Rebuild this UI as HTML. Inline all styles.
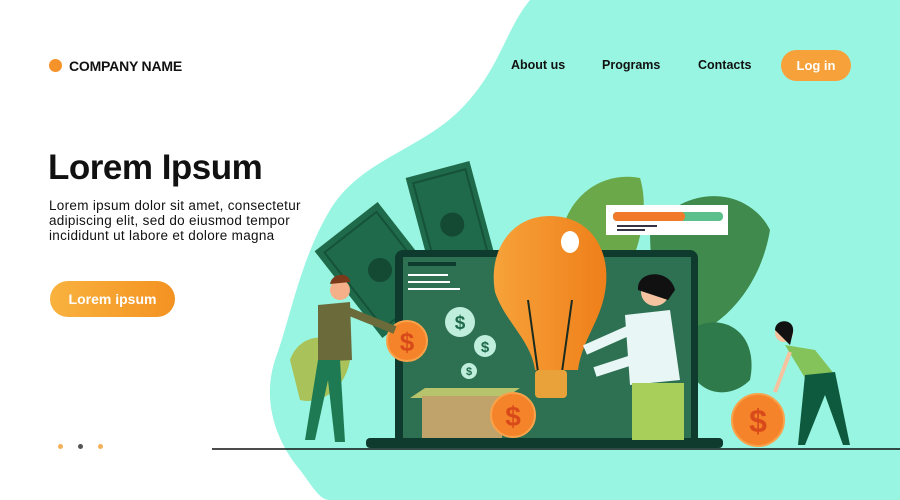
<!DOCTYPE html>
<html><head><style>
body{margin:0;width:900px;height:500px;overflow:hidden;background:#fff;font-family:"Liberation Sans",sans-serif;position:relative}
.a{position:absolute}
</style></head><body>
<svg class="a" style="left:0;top:0" width="900" height="500" viewBox="0 0 900 500">
<path d="M530 0 C505 30 500 70 460 110 C420 150 360 160 330 210 C300 260 290 320 275 360 C262 400 275 440 300 470 C315 490 320 500 330 500 L900 500 L900 0 Z" fill="#98f5e1"/>
<path d="M560 250 C560 200 600 170 640 178 C650 210 640 260 610 300 Z" fill="#6aa84a"/>
<path d="M650 230 C690 180 750 190 770 230 C760 290 720 330 680 340 C660 320 650 280 650 230Z" fill="#3f8a4c"/>
<path d="M690 330 C720 310 760 330 750 380 C730 400 700 395 690 370Z" fill="#2f7a4a"/>
<path d="M290 360 C300 330 340 330 350 360 C345 390 320 405 300 400Z" fill="#a9c35a"/>
<g transform="rotate(-38 380 270)"><rect x="340" y="215" width="80" height="110" fill="#1f6a4b"/><rect x="347" y="222" width="66" height="96" fill="none" stroke="#155238" stroke-width="2"/><circle cx="380" cy="270" r="12" fill="#144a33"/></g>
<g transform="rotate(-15 450 220)"><rect x="418" y="168" width="66" height="110" fill="#1f6a4b"/><rect x="424" y="175" width="54" height="96" fill="none" stroke="#155238" stroke-width="2"/><circle cx="451" cy="225" r="12" fill="#144a33"/></g>
<rect x="395" y="250" width="303" height="195" rx="8" fill="#0e3b2e"/>
<rect x="403" y="257" width="288" height="183" fill="#2d7152"/>
<rect x="366" y="438" width="357" height="10" rx="4" fill="#0e3b2e"/>
<rect x="408" y="262" width="48" height="4" fill="#0e3b2e"/>
<rect x="408" y="274" width="40" height="2" fill="#fff"/><rect x="408" y="281" width="42" height="2" fill="#fff"/><rect x="408" y="288" width="52" height="2" fill="#fff"/>
<circle cx="460" cy="322" r="15" fill="#bfeedd"/><text x="460" y="329" font-size="19" text-anchor="middle" fill="#1f6a4b" font-weight="bold">$</text>
<circle cx="485" cy="346" r="11" fill="#bfeedd"/><text x="485" y="352" font-size="15" text-anchor="middle" fill="#1f6a4b" font-weight="bold">$</text>
<circle cx="469" cy="371" r="8" fill="#bfeedd"/><text x="469" y="375" font-size="11" text-anchor="middle" fill="#1f6a4b" font-weight="bold">$</text>
<path d="M410 398 L425 388 L520 388 L505 398Z" fill="#b7c46c"/><rect x="422" y="396" width="80" height="42" fill="#c0a36a"/>
<defs><linearGradient id="g" x1="0" x2="1"><stop offset="0" stop-color="#f7a23a"/><stop offset="1" stop-color="#ef7f1a"/></linearGradient></defs>
<path d="M550 216 C592 216 612 252 605 292 C600 322 582 340 578 370 L535 370 C531 340 505 322 495 292 C488 252 510 216 550 216Z" fill="url(#g)"/>
<ellipse cx="570" cy="242" rx="9" ry="11" fill="#fff"/>
<path d="M528 300 L538 372 M572 300 L562 372" stroke="#1b2b1f" stroke-width="2"/>
<rect x="535" y="370" width="32" height="28" rx="4" fill="#e9a23a"/>
<rect x="606" y="205" width="122" height="30" fill="#fff"/>
<rect x="613" y="212" width="110" height="9" rx="4" fill="#5cc08c"/><rect x="613" y="212" width="72" height="9" rx="4" fill="#f07a2a"/>
<rect x="617" y="225" width="40" height="2" fill="#334"/><rect x="617" y="229" width="28" height="2" fill="#334"/>
<g fill="#f5832a" stroke="#f9a24a" stroke-width="2"><circle cx="407" cy="341" r="20"/><circle cx="513" cy="415" r="22"/><circle cx="758" cy="420" r="26"/></g>
<g font-weight="bold" fill="#d94a1a" text-anchor="middle"><text x="407" y="351" font-size="26">$</text><text x="513" y="426" font-size="28">$</text><text x="758" y="432" font-size="32">$</text></g>
<circle cx="340" cy="290" r="10" fill="#f5b08a"/><path d="M330 284 C332 272 350 272 350 282Z" fill="#7a3a1a"/>
<path d="M318 305 L350 302 L352 360 L318 362Z" fill="#6b6a3a"/><path d="M345 310 L395 330" stroke="#6b6a3a" stroke-width="8"/>
<path d="M318 360 L340 360 L345 442 L335 442 L328 380 L315 440 L305 440Z" fill="#1e7a52"/>
<circle cx="655" cy="292" r="14" fill="#f5c3a0"/><path d="M638 290 C636 270 670 268 675 290 L668 300Z" fill="#111"/>
<path d="M625 315 L670 310 L680 380 L630 385Z" fill="#e8f6f5"/><path d="M630 330 L585 350 M632 360 L595 372" stroke="#e8f6f5" stroke-width="10"/>
<rect x="632" y="383" width="52" height="57" fill="#a8cf5a"/>
<circle cx="784" cy="333" r="9" fill="#f5c3a0"/><path d="M775 330 C775 318 795 318 793 332 L790 345Z" fill="#111"/>
<path d="M785 345 L815 350 L835 375 L805 378Z" fill="#84c35a"/><path d="M790 352 L775 392" stroke="#f5c3a0" stroke-width="4"/>
<path d="M805 375 L835 372 L850 445 L843 445 L825 395 L805 445 L798 445Z" fill="#0e5a3e"/>
<line x1="212" y1="449" x2="900" y2="449" stroke="#111" stroke-width="1.5"/>
</svg>
<div class="a" style="left:49px;top:59px;width:13px;height:13px;border-radius:50%;background:#f5922a"></div>
<div class="a" style="left:69px;top:58px;font-size:14px;font-weight:bold;color:#111;letter-spacing:-0.2px">COMPANY NAME</div>
<div class="a" style="left:511px;top:58px;font-size:12.5px;font-weight:bold;color:#111">About us</div>
<div class="a" style="left:602px;top:58px;font-size:12.5px;font-weight:bold;color:#111">Programs</div>
<div class="a" style="left:698px;top:58px;font-size:12.5px;font-weight:bold;color:#111">Contacts</div>
<div class="a" style="left:781px;top:50px;width:70px;height:31px;border-radius:16px;background:#f7a13a;color:#fff;font-size:13px;font-weight:bold;text-align:center;line-height:31px">Log in</div>
<div class="a" style="left:48px;top:148px;font-size:35px;font-weight:bold;color:#111;letter-spacing:-0.5px">Lorem Ipsum</div>
<div class="a" style="left:49px;top:198px;font-size:13.5px;line-height:15px;color:#111;letter-spacing:0.3px">Lorem ipsum dolor sit amet, consectetur<br>adipiscing elit, sed do eiusmod tempor<br>incididunt ut labore et dolore magna</div>
<div class="a" style="left:50px;top:281px;width:125px;height:36px;border-radius:18px;background:linear-gradient(90deg,#f9b23e,#f39222);color:#fff;font-size:14px;font-weight:bold;text-align:center;line-height:36px">Lorem ipsum</div>
<div class="a" style="left:58px;top:444px;width:5px;height:5px;border-radius:50%;background:#f5b05a"></div>
<div class="a" style="left:78px;top:444px;width:5px;height:5px;border-radius:50%;background:#555"></div>
<div class="a" style="left:98px;top:444px;width:5px;height:5px;border-radius:50%;background:#f5b05a"></div>
</body></html>
